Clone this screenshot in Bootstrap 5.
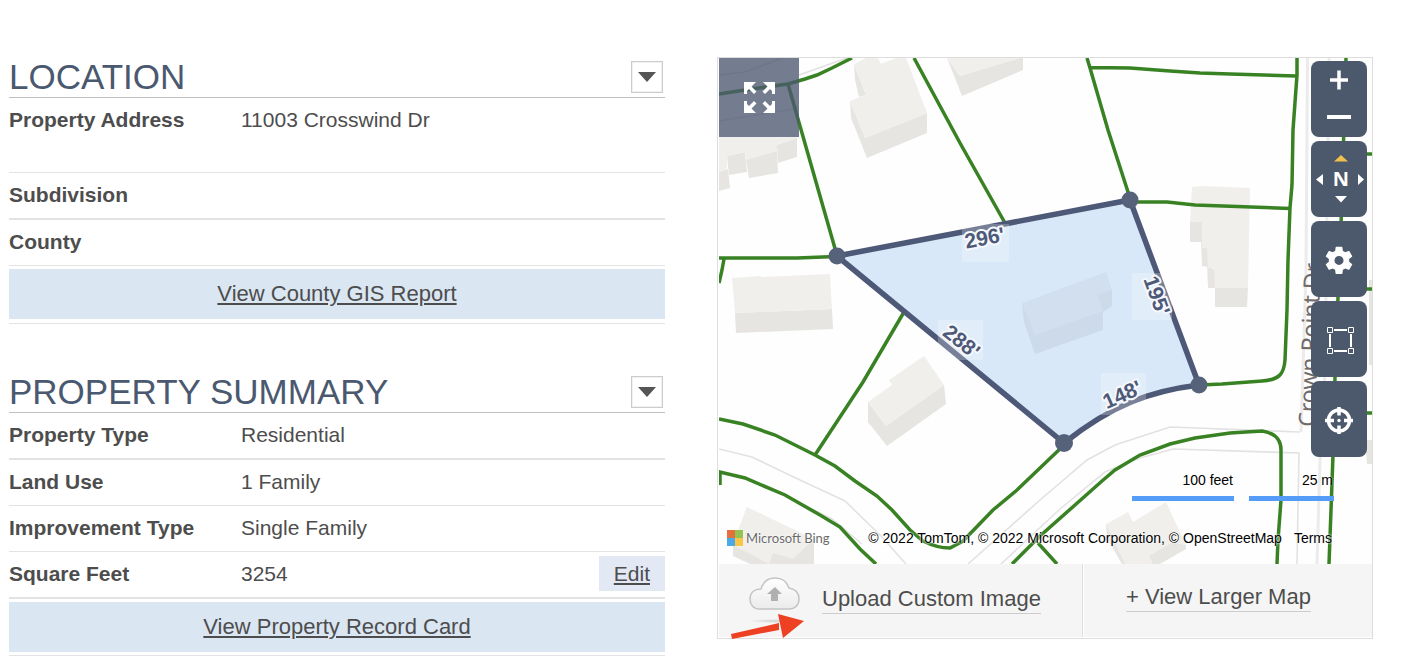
<!DOCTYPE html>
<html lang="en">
<head>
<meta charset="utf-8">
<meta name="viewport" content="width=device-width, initial-scale=1">
<title>Property details</title>
<link href="https://cdn.jsdelivr.net/npm/bootstrap@5.3.0/dist/css/bootstrap.min.css" rel="stylesheet">
<style>
  body { font-family: "Liberation Sans", Arial, sans-serif; font-size: 21px; line-height: 30px; color: #4d4d4d; background: #fff; }
  .page { grid-template-columns: minmax(0, 1fr) minmax(0, 1fr); padding: 57px 41px 0 9px; gap: 52px; }
  .sec-head { border-bottom: 1px solid #c0c0c0; }
  .sec-head h2 { font-size: 35px; line-height: 40px; font-weight: 400; color: #4a596f; }
  .sec + .sec { margin-top: 48px; }
  .toggle-btn { width: 32px; height: 32px; margin: 4px 2px 0 0; border: 1px solid #ccc; background: #fff; box-shadow: inset 0 0 0 1px #f1f1f1; }
  .fact { min-height: 46px; border-bottom: 1px solid #e3e3e3; }
  .fact.thick { border-bottom-width: 2px; min-height: 47px; }
  .fact.tall { min-height: 75px; }
  .fact dt { width: 232px; padding-top: 7px; font-weight: 700; }
  .fact dd { padding-top: 7px; }
  .fact .edit-cell { margin-top: 4px; padding: 3px 15px 2px; background: #e2e8f4; }
  .edit-link, .bar-link { color: #4d4d4d; text-underline-offset: 2px; text-decoration-thickness: 2px; }
  .bar-wrap { padding: 3px 0; border-bottom: 1px solid #e3e3e3; }
  .bar-link { background: #dae6f2; font-size: 22px; line-height: 50px; }
  .map-card { border: 1px solid #ddd; padding: 0 0 1px 1px; }
  .map-area { height: 506px; overflow: hidden; }
  .map-area .map-art { width: 100%; height: 100%; display: block; }
  .expand-btn { width: 80px; height: 79px; background: rgba(76,88,112,.78); }
  .tools { top: 3px; right: 5px; gap: 4px; }
  .tool { width: 56px; height: 76px; border-radius: 8px; background: #4c586b; overflow: hidden; }
  .tool-half { height: 38px; }
  .map-note { font-size: 14px; line-height: 18px; color: #000; text-shadow: 0 0 2px #fff, 0 0 2px #fff; left: 8px; right: 40px; bottom: 17px; }
  .scale-row { right: 38px; bottom: 63px; gap: 15px; font-size: 14px; line-height: 18px; color: #000; text-shadow: 0 0 2px #fff; }
  .scale-row span { border-bottom: 5px solid #559bf8; padding: 0 1px 7px 0; text-align: right; width: 102px; }
  .scale-row .metric { width: 85px; }
  .bing { font-family: Lato, sans-serif; font-size: 13px; color: #6b6b6b; gap: 3px; }
  .map-foot { grid-template-columns: 364fr 289fr; background: #f5f5f5; height: 73px; font-size: 22px; line-height: 28px; }
  .foot-upload { padding: 13px 0 0 30px; border-right: 1px solid #ddd; gap: 22px; }
  .foot-larger { padding: 19px 0 0 42px; border-left: 1px solid #fff; }
  .foot-link { color: #4d4d4d; text-decoration: none; border-bottom: 1px solid #ccc; white-space: nowrap; }
  .foot-upload .foot-link { margin-top: 8px; }
  .pointer-arrow { left: 11px; top: 49px; }
</style>
</head>
<body>
<main class="page d-grid align-items-start">
  <div>
    <section class="sec">
      <div class="sec-head d-flex justify-content-between align-items-start">
        <h2 class="m-0">LOCATION</h2>
        <button type="button" class="toggle-btn p-0 d-flex align-items-center justify-content-center" aria-label="Collapse location">
          <svg width="18" height="10"><path d="M0 0h18L9 10z" fill="#555"/></svg>
        </button>
      </div>
      <dl class="m-0">
        <div class="fact tall d-flex"><dt>Property Address</dt><dd class="m-0">11003 Crosswind Dr</dd></div>
        <div class="fact thick d-flex"><dt>Subdivision</dt><dd class="m-0"></dd></div>
        <div class="fact d-flex"><dt>County</dt><dd class="m-0"></dd></div>
      </dl>
      <div class="bar-wrap pb-1"><a href="#" class="bar-link d-block text-center">View County GIS Report</a></div>
    </section>
    <section class="sec">
      <div class="sec-head d-flex justify-content-between align-items-start">
        <h2 class="m-0">PROPERTY SUMMARY</h2>
        <button type="button" class="toggle-btn p-0 d-flex align-items-center justify-content-center" aria-label="Collapse property summary">
          <svg width="18" height="10"><path d="M0 0h18L9 10z" fill="#555"/></svg>
        </button>
      </div>
      <dl class="m-0">
        <div class="fact thick d-flex"><dt>Property Type</dt><dd class="m-0">Residential</dd></div>
        <div class="fact d-flex"><dt>Land Use</dt><dd class="m-0">1 Family</dd></div>
        <div class="fact d-flex"><dt>Improvement Type</dt><dd class="m-0">Single Family</dd></div>
        <div class="fact thick d-flex"><dt>Square Feet</dt><dd class="m-0 flex-grow-1">3254</dd><dd class="edit-cell mb-0 ms-0 align-self-start"><a href="#" class="edit-link">Edit</a></dd></div>
      </dl>
      <div class="bar-wrap"><a href="#" class="bar-link d-block text-center">View Property Record Card</a></div>
    </section>
  </div>

  <section class="map-card" aria-label="Map">
    <div class="map-area position-relative">
      <svg class="map-art" viewBox="719 58 653 506" preserveAspectRatio="xMidYMid slice">
        <rect x="719" y="58" width="653" height="506" fill="#fefefe"/>
        <!-- buildings: sides, then roofs -->
        <g fill="#e6e5e2">
          <path d="M850 101L865 138 927 113V133L867 158 851 118zM854 64L866 95 859 97 855 80z"/>
          <path d="M947 58L960 76 1023 57V70L962 96z"/>
          <path d="M719 172L728 169 730 188 719 191zM727 156L745 152 747 172 729 175zM746 159L777 151 778 173 749 178zM777 145L797 138V157L778 163z"/>
          <path d="M735 313L832 309 833 329 736 333z"/>
          <path d="M868 402L886 426 944 385 946 404 887 446 868 422z"/>
          <path d="M1190 222H1204V242H1190zM1201 240H1208V267L1202 266zM1207 265L1215 270V307H1247L1248 288H1208z"/>
          <path d="M747 507L733 545V556L750 564H814V540L780 540z"/>
          <path d="M1106 524L1107 538 1122 564H1160L1186 549V545z"/>
          <path d="M1369 280h3v85h-3zM1365 440h7v24h-5z"/>
        </g>
        <g fill="#f0efec">
          <path d="M854 64L866 58H878L881 64 896 58H906L927 113 865 138 850 101 866 95z"/>
          <path d="M947 58H1023V57L960 76z"/>
          <path d="M719 137H797V138L777 145V151L747 160 745 152 727 156V169L719 172z"/>
          <path d="M732 278L761 276V277L830 274 832 309 735 313z"/>
          <path d="M868 402L892 385 889 380 924 356 944 385 886 426z"/>
          <path d="M1192 187L1204 186 1250 188 1248 288H1215L1214 268H1208L1207 248H1202V222H1190z"/>
          <path d="M747 507L814 539 793 559 773 553 769 564 733 545z"/>
          <path d="M1106 524L1128 512 1133 522 1166 502 1186 545 1172 543 1149 556 1153 564H1125z"/>
        </g>
        <!-- road edges -->
        <g fill="none" stroke="#e2e2e2" stroke-width="1.600">
          <path d="M719 75L745 72 799 52M799 75L847 58M719 121L799 108" />
          <path d="M719 449L752 457 800 480 845 501 880 535 906 564M800 503L832 519 862 544"/>
          <path d="M968 564L1040 500 1087 460 1115 445 1170 427 1300 432M1001 564L1060 509 1105 472 1140 458 1173 449 1299 453 1297 564"/>
          <path d="M1307.500 58L1306 270 1301 432M1329 58L1325 370 1320 460 1317 564" stroke-width="3" stroke="#ebebeb"/>
        </g>
        <text transform="translate(1315 427) rotate(-88)" font-family="Noto Sans, sans-serif" font-size="23" fill="#706a68">Crown Point Dr</text>
        <!-- lot boundaries -->
        <g fill="none" stroke="#388224" stroke-width="3.500">
          <path d="M719 94L745 90 788 84 805 79 817 75 832 68 852 58M788 84L806 147 836 252"/>
          <path d="M914 58L960 143 1005 223M719 258H797L836 256.500M724 259L722 270 719 283"/>
          <path d="M1087 58L1090 68 1108 130 1129 195M1090 67.500L1130 68 1170 71 1200 73 1230 74 1296 76"/>
          <path d="M1297 58V75L1293 130 1292 185 1290 208 1288 260 1287 310 1285 360C1284 374 1279 380 1262 381L1222 384 1200 385M1130 202L1167 202 1195 205 1290 208.500"/>
          <path d="M1346 58L1341 225 1338 297 1335 377 1333 455 1331 510 1329 564M1340 154H1372M1336 289H1372M1333 413H1372"/>
          <path d="M904 312L863 382 815 455"/>
          <path d="M719 419L743 424 775 435 815 455 835 466 855 481 877 496 892 510 910 530 923 541Q937 548 950 548L963 541 993 510 1017 490 1040 468 1063 446"/>
          <path d="M720 485V472L745 478 785 495 820 515 840 527 860 549 876 564"/>
          <path d="M1012 564L1040 536 1075 505 1102 481 1115 470 1140 455 1170 444 1195 438 1230 433 1262 431Q1281 434 1281 450V500L1278 540 1277 564M1038 543L1057 564"/>
        </g>
        <!-- selected parcel -->
        <path d="M837 256L1130 200 1199 385C1150 391 1112 405 1064 443z" fill="#d9e8f9" stroke="#4e5978" stroke-width="5.500"/>
        <path d="M1022 303L1035 333 1096 310 1112 291 1112 306 1103 312V330L1035 354 1024 322z" fill="#cddaea"/>
        <path d="M1022 303L1106 272 1112 290 1097 294 1103 311 1035 335z" fill="#d2dfef"/>
        <path d="M1097 294L1112 290V306L1103 311z" fill="#cddaea"/>
        <g fill="#fff" fill-opacity=".24">
          <rect x="962" y="224" width="47" height="38"/><rect x="938" y="320" width="45" height="40"/>
          <rect x="1132" y="273" width="40" height="47"/><rect x="1101" y="373" width="45" height="42"/>
        </g>
        <g fill="#55627a"><circle cx="837" cy="256" r="8.500"/><circle cx="1130" cy="200" r="8.500"/><circle cx="1199" cy="385" r="8.500"/><circle cx="1064" cy="443" r="9"/></g>
        <g font-size="21" font-weight="700" fill="#4e5978" stroke="#f5f8fd" stroke-width="4" stroke-linejoin="round" paint-order="stroke" text-anchor="middle">
          <text transform="translate(986 245) rotate(-11)">296'</text>
          <text transform="translate(957 347) rotate(39)">288'</text>
          <text transform="translate(1150 298) rotate(70)">195'</text>
          <text transform="translate(1125 401) rotate(-24)">148'</text>
        </g>
      </svg>

      <button type="button" class="expand-btn border-0 p-0 position-absolute top-0 start-0 d-flex align-items-center justify-content-center" aria-label="Full screen">
        <svg width="31" height="31" fill="#fff"><defs><path id="corner" d="M0 0H12L7.500 4.500 12.500 9.500 10 12 5 7 3 9V12H0z"/></defs>
          <use href="#corner"/><use href="#corner" transform="matrix(-1 0 0 1 31 0)"/><use href="#corner" transform="matrix(1 0 0 -1 0 31)"/><use href="#corner" transform="matrix(-1 0 0 -1 31 31)"/></svg>
      </button>

      <div class="tools position-absolute d-flex flex-column">
        <div class="tool">
          <button type="button" class="tool-half w-100 border-0 bg-transparent p-0 d-block" aria-label="Zoom in"><svg class="d-block" width="56" height="38"><path d="M19 19H37M28 9.500V28.500" stroke="#fff" stroke-width="3.500"/></svg></button>
          <button type="button" class="tool-half w-100 border-0 bg-transparent p-0 d-block" aria-label="Zoom out"><svg class="d-block" width="56" height="38"><path d="M16 18H40" stroke="#fff" stroke-width="4"/></svg></button>
        </div>
        <button type="button" class="tool border-0 p-0" aria-label="Rotate map">
          <svg class="d-block" width="56" height="76" fill="#fff"><path d="M30 14L37 20.500H23z" fill="#f0c04c"/><path d="M30 61.500L36 55H24zM5 38.500L12 33V44zM53 38.500L47 33V44z"/><text x="30" y="45" text-anchor="middle" font-family="Open Sans, sans-serif" font-weight="700" font-size="20">N</text></svg>
        </button>
        <button type="button" class="tool border-0 p-0 d-flex align-items-center justify-content-center" aria-label="Settings">
          <svg width="34" height="34" viewBox="0 -1 24 24" fill="#fff"><path d="M19.140 12.940c.04-.3.06-.61.06-.94 0-.32-.02-.64-.07-.94l2.030-1.580c.18-.14.23-.41.12-.61l-1.920-3.320c-.12-.22-.37-.29-.59-.22l-2.390.96c-.5-.38-1.030-.7-1.620-.94L14.400 2.810c-.04-.24-.24-.41-.48-.41h-3.840c-.24 0-.43.17-.47.41L9.250 5.350C8.660 5.590 8.120 5.920 7.630 6.290L5.240 5.330c-.22-.08-.47 0-.59.22L2.740 8.870c-.12.21-.08.47.12.61l2.030 1.580C4.840 11.360 4.800 11.690 4.800 12s.02.64.07.94l-2.030 1.580c-.18.14-.23.41-.12.61l1.920 3.320c.12.22.37.29.59.22l2.390-.96c.5.38 1.030.7 1.620.94l.36 2.540c.05.24.24.41.48.41h3.840c.24 0 .44-.17.47-.41l.36-2.540c.59-.24 1.130-.56 1.620-.94l2.390.96c.22.08.47 0 .59-.22l1.920-3.320c.12-.22.07-.47-.12-.61zM12 15.200a3.200 3.200 0 1 1 0-6.400 3.200 3.200 0 0 1 0 6.400z"/></svg>
        </button>
        <button type="button" class="tool border-0 p-0" aria-label="Select area">
          <svg class="d-block" width="56" height="76" fill="none" stroke="#fff"><path d="M16.500 26.500h5v5h-5zM37.500 26.500h5v5h-5zM16.500 47.500h5v5h-5zM37.500 47.500h5v5h-5z"/><path d="M23 29H36M23 50H36M19 33V46M40 33V46" stroke-width="2"/></svg>
        </button>
        <button type="button" class="tool border-0 p-0" aria-label="Locate me">
          <svg class="d-block" width="56" height="76" fill="none" stroke="#fff"><circle cx="28" cy="39.500" r="10.500" stroke-width="3.500"/><path d="M28 26V34.500M28 44.500V53M14 39.500H23M33 39.500H42" stroke-width="3.500"/><circle cx="28" cy="39.500" r="1.700" fill="#fff" stroke="none"/></svg>
        </button>
      </div>

      <div class="scale-row position-absolute d-flex"><span>100 feet</span><span class="metric">25 m</span></div>
      <div class="map-note position-absolute d-flex align-items-center">
        <div class="bing d-flex align-items-center">
          <svg width="16" height="16"><path d="M0 0h8v8H0z" fill="#e3713b"/><path d="M8 0h8v8H8z" fill="#94c353"/><path d="M0 8h8v8H0z" fill="#4ba9e8"/><path d="M8 8h8v8H8z" fill="#fbc546"/></svg>
          <span>Microsoft Bing</span>
        </div>
        <span class="ms-auto text-nowrap">© 2022 TomTom, © 2022 Microsoft Corporation, © OpenStreetMap</span>
        <a href="#" class="text-black text-decoration-none ms-2 ps-1">Terms</a>
      </div>
    </div>

    <div class="map-foot d-grid">
      <div class="foot-upload position-relative d-flex align-items-start">
        <svg width="51" height="46" viewBox="0 0 51 46">
          <defs><linearGradient id="cloudFill" x1="0" y1="0" x2="0" y2="1"><stop offset="0" stop-color="#fff"/><stop offset="1" stop-color="#ebebeb"/></linearGradient>
          <radialGradient id="cloudShade"><stop offset="0" stop-color="#ccc"/><stop offset="1" stop-color="#ccc" stop-opacity="0"/></radialGradient></defs>
          <ellipse cx="26" cy="44" rx="25" ry="2" fill="url(#cloudShade)"/>
          <path d="M10 32C4 32 1 27 1 22 1 16 5 12 12 12 14 5 19 1 26 1 33 1 38 5 40 11 46 12 50 16 50 22 50 28 46 32 40 32z" fill="url(#cloudFill)" stroke="#c4c4c4" stroke-width="1.500"/>
          <path d="M26 10L33 17H29V24H22V17H18z" fill="#b0b0b0"/>
        </svg>
        <a href="#" class="foot-link">Upload Custom Image</a>
        <svg class="pointer-arrow position-absolute" width="75" height="26" fill="#ee4023"><path d="M1 21L49 10V17L2 26zM48 1L74 8 53 25z"/></svg>
      </div>
      <div class="foot-larger d-flex align-items-start"><a href="#" class="foot-link">+ View Larger Map</a></div>
    </div>
  </section>
</main>
<script src="https://cdn.jsdelivr.net/npm/bootstrap@5.3.0/dist/js/bootstrap.bundle.min.js"></script>
</body>
</html>
